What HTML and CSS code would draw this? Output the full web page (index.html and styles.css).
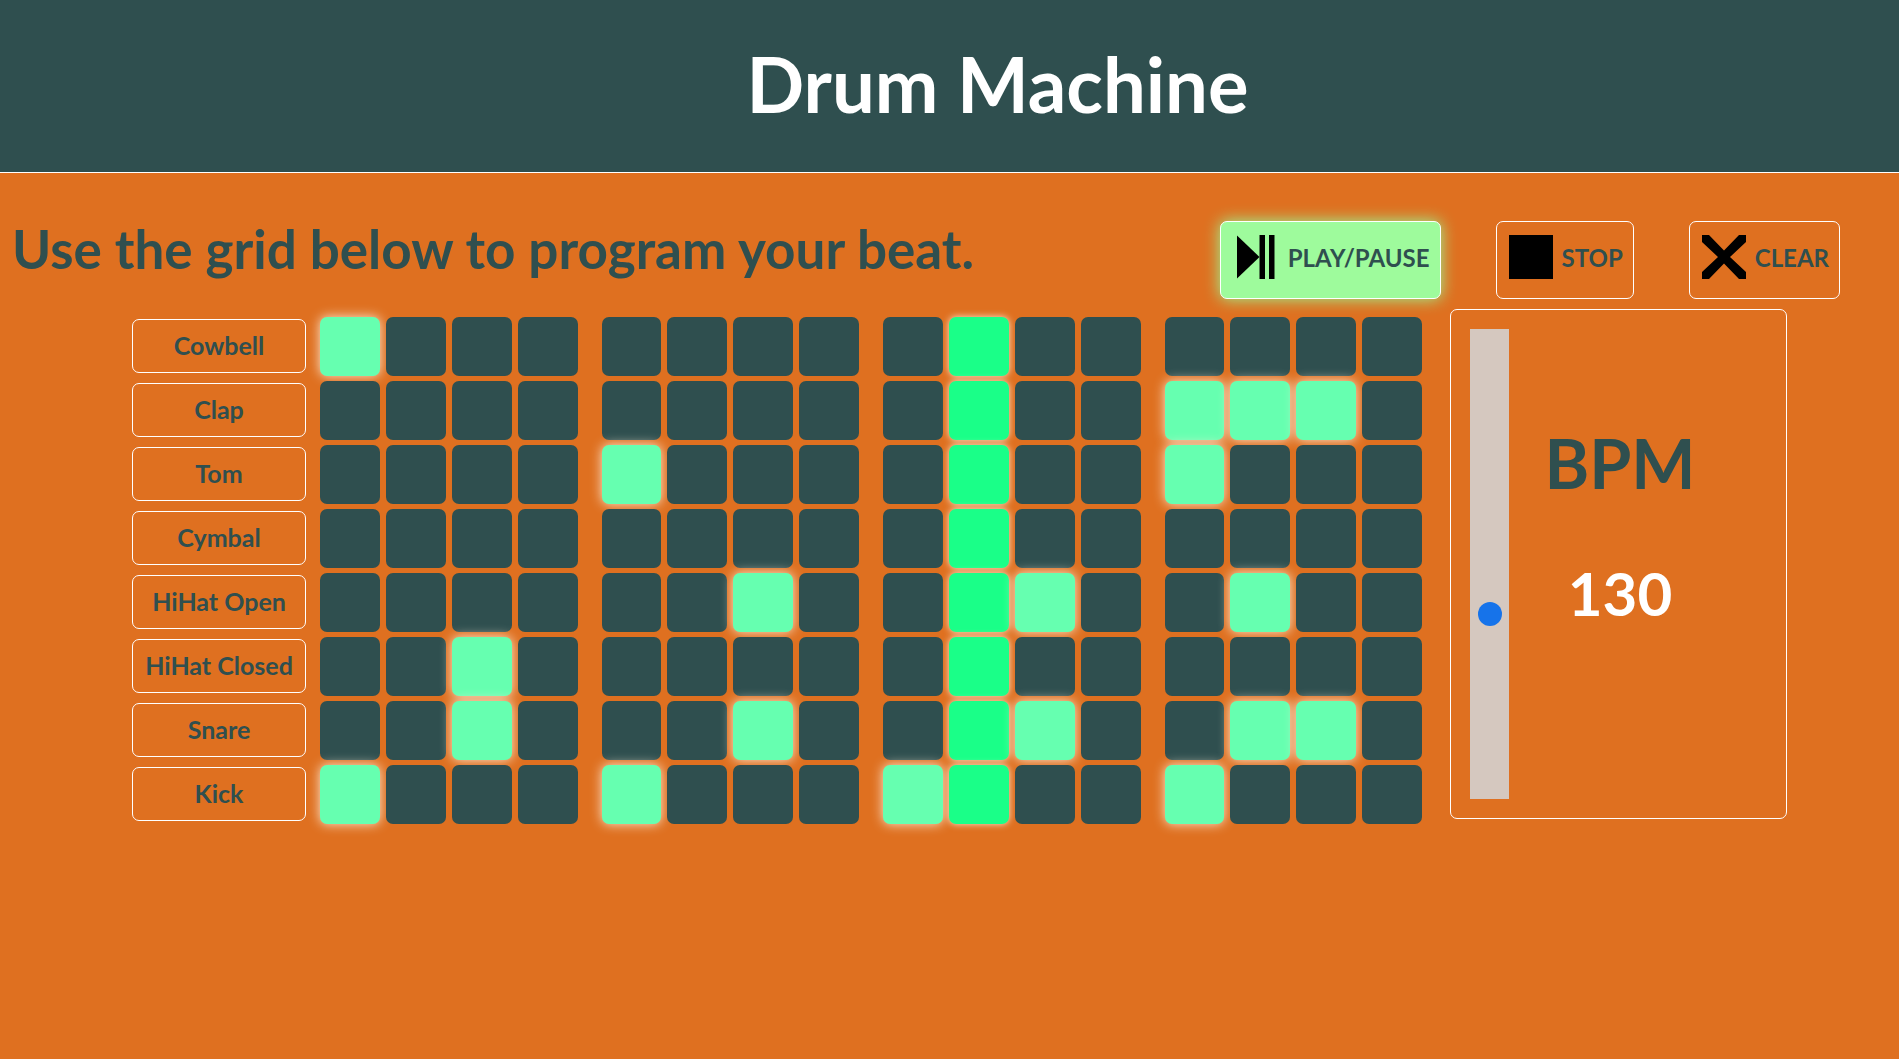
FILE: index.html
```html
<!DOCTYPE html>
<html lang="en">
<head>
    <meta charset="UTF-8">
    <meta name="viewport" content="width=device-width, initial-scale=1.0">
    <title>Drum Machine</title>
    <link rel="stylesheet" href="styles.css">
</head>
<body>
    <header>
        <h1>Drum Machine</h1>
    </header>

    <main>
        <!-- Instructions and transport buttons -->
        <div class="top-bar">
            <h2>Use the grid below to program your beat.</h2>
            <div class="controls">
                <button type="button" id="playButton" class="control playing">
                    <svg width="46" height="44" viewBox="0 0 46 44" aria-hidden="true">
                        <path d="M4 0.5L26.5 22L4 43.5Z"/>
                        <rect x="26.5" width="5.5" height="44"/>
                        <rect x="36" width="5.5" height="44"/>
                    </svg>
                    PLAY/PAUSE
                </button>
                <button type="button" id="stopButton" class="control">
                    <svg width="44" height="44" viewBox="0 0 44 44" aria-hidden="true">
                        <rect width="44" height="44"/>
                    </svg>
                    STOP
                </button>
                <button type="button" id="clearButton" class="control">
                    <svg width="44" height="44" viewBox="0 0 44 44" aria-hidden="true">
                        <path d="M0 0H7L22 15.5L37 0H44V7L28 22L44 37V44H37L22 28.5L7 44H0V37L16 22L0 7Z"/>
                    </svg>
                    CLEAR
                </button>
            </div>
        </div>

        <div class="machine">
            <!-- Rows are filled in by the script -->
            <div class="sequencer" id="sequencer"></div>

            <div class="bpm-panel">
                <input type="range" id="bpm" class="bpm-slider" min="60" max="240" value="130">
                <div class="bpm-text">
                    <label for="bpm">BPM</label>
                    <output for="bpm" id="bpmValue">130</output>
                </div>
            </div>
        </div>
    </main>

    <script>
        // x = step is on
        const tracks = [
            { name: 'Cowbell',      steps: 'x--- ---- ---- ----' },
            { name: 'Clap',         steps: '---- ---- ---- xxx-' },
            { name: 'Tom',          steps: '---- x--- ---- x---' },
            { name: 'Cymbal',       steps: '---- ---- ---- ----' },
            { name: 'HiHat Open',   steps: '---- --x- --x- -x--' },
            { name: 'HiHat Closed', steps: '--x- ---- ---- ----' },
            { name: 'Snare',        steps: '--x- --x- --x- -xx-' },
            { name: 'Kick',         steps: 'x--- x--- x--- x---' }
        ];
        const currentStep = 9;
        const sequencer = document.getElementById('sequencer');

        tracks.forEach(track => {
            const row = document.createElement('div');
            row.className = 'track';

            const name = document.createElement('div');
            name.className = 'track-name';
            name.textContent = track.name;
            row.appendChild(name);

            const steps = document.createElement('div');
            steps.className = 'steps';
            track.steps.split(' ').forEach((beat, b) => {
                const group = document.createElement('div');
                group.className = 'beat';
                [...beat].forEach((mark, s) => {
                    const index = b * 4 + s;
                    const step = document.createElement('input');
                    step.type = 'checkbox';
                    step.className = 'step';
                    step.checked = mark === 'x';
                    step.setAttribute('aria-label', `${track.name} step ${index + 1}`);
                    if (index === currentStep) step.classList.add('current');
                    group.appendChild(step);
                });
                steps.appendChild(group);
            });
            row.appendChild(steps);
            sequencer.appendChild(row);
        });

        function clearCurrent() {
            document.querySelectorAll('.step.current').forEach(step => step.classList.remove('current'));
        }

        document.getElementById('bpm').addEventListener('input', e => {
            document.getElementById('bpmValue').textContent = e.target.value;
        });
        document.getElementById('playButton').addEventListener('click', e => {
            e.currentTarget.classList.toggle('playing');
        });
        document.getElementById('stopButton').addEventListener('click', () => {
            document.getElementById('playButton').classList.remove('playing');
            clearCurrent();
        });
        document.getElementById('clearButton').addEventListener('click', () => {
            document.querySelectorAll('.step').forEach(step => step.checked = false);
        });
    </script>
</body>
</html>
```
FILE: styles.css
```css
* {
    box-sizing: border-box;
}

body {
    margin: 0;
    background-color: #DF7020;
    color: darkslategray;
    font-family: 'Trebuchet MS', Lato, sans-serif;
    font-weight: bold;
}

/* Header */
header {
    padding: 38px 0 43px 96px;
    background-color: darkslategray;
    border-bottom: 1px solid #fff;
    text-align: center;
}
h1 {
    margin: 0;
    color: #fff;
    font-size: 76px;
    line-height: 91px;
}

/* Instructions and buttons */
.top-bar {
    display: flex;
    justify-content: space-between;
    align-items: flex-start;
    padding: 48px 59px 10px 12px;
}
h2 {
    margin: 0;
    font-size: 53px;
    line-height: 56px;
}
.controls {
    display: flex;
    gap: 55px;
}
.control {
    display: flex;
    align-items: center;
    gap: 9px;
    padding: 13px 10px 19px 12px;
    background: none;
    border: 1px solid #fff;
    border-radius: 7px;
    color: darkslategray;
    font: inherit;
    font-size: 24px;
    white-space: nowrap;
    cursor: pointer;
}
.control svg {
    display: block;
    fill: #000;
}
.control.playing {
    background-color: #9EFB9C;
    box-shadow: 0 0 16px palegreen;
}

/* Sequencer and BPM panel */
.machine {
    display: flex;
    align-items: flex-start;
    gap: 28px;
    padding: 0 112px 0 132px;
}
.sequencer {
    flex: 1;
    display: flex;
    flex-direction: column;
    gap: 5px;
    padding: 8px 0 20px;
}
.track {
    display: flex;
    align-items: center;
    gap: 14px;
}
.track-name {
    width: 174px;
    margin-bottom: 1px;
    padding: 10px 0 12px;
    border: 1px solid #fff;
    border-radius: 7px;
    font-size: 25px;
    line-height: 30px;
    text-align: center;
}
.steps {
    flex: 1;
    display: grid;
    grid-template-columns: repeat(4, 1fr);
    gap: 24px;
}
.beat {
    display: grid;
    grid-template-columns: repeat(4, 1fr);
    gap: 6px;
}
.step {
    appearance: none;
    width: 100%;
    height: 59px;
    margin: 0;
    background-color: darkslategray;
    border-radius: 7px;
    cursor: pointer;
}
.step:checked {
    background-color: #66FFB0;
    box-shadow: 0 0 12px antiquewhite;
}
.step.current {
    background-color: #1AFF88;
    box-shadow: 0 0 7px antiquewhite;
}

/* BPM */
.bpm-panel {
    display: flex;
    width: 337px;
    padding: 19px;
    border: 1px solid #fff;
    border-radius: 7px;
}
.bpm-slider {
    appearance: none;
    writing-mode: vertical-lr;
    direction: rtl;
    width: 39px;
    height: 470px;
    margin: 0;
    background-color: #D5C8BF;
}
.bpm-slider::-webkit-slider-thumb {
    appearance: none;
    width: 24px;
    height: 24px;
    background-color: #1673EA;
    border-radius: 50%;
}
.bpm-text {
    flex: 1;
    display: flex;
    flex-direction: column;
    align-items: center;
    gap: 50px;
    padding: 94px 36px 0 0;
}
.bpm-text label {
    font-size: 68px;
    line-height: 80px;
}
.bpm-text output {
    color: #fff;
    font-size: 60px;
    line-height: 80px;
}
```
